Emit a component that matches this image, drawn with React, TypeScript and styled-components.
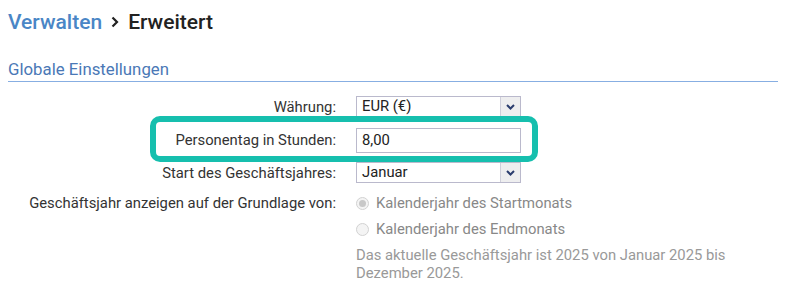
import React from 'react'
import styled, { createGlobalStyle } from 'styled-components'

const GlobalStyle = createGlobalStyle`
  body {
    margin: 0;
    background: #fff;
    font-family: Roboto, 'Liberation Sans', Arial, sans-serif;
  }
`

const Page = styled.div`
  padding: 8px 25px 0 8px;
`

const Title = styled.h1`
  margin: 0;
  font-size: 21px;
  font-weight: 500;
  line-height: 28px;
  color: #222;
  display: flex;
  align-items: center;
  gap: 9px;
`

const Crumb = styled.span`
  color: #4a86c6;
`

const Section = styled.h2`
  margin: 22px 0 0;
  font-size: 16.8px;
  font-weight: 400;
  line-height: 22px;
  color: #4a78b6;
  padding-bottom: 1px;
  border-bottom: 1px solid #87aee2;
`

const Form = styled.div`
  margin-top: 11px;
`

const Row = styled.div<{ $height?: number; $top?: boolean }>`
  position: relative;
  display: grid;
  grid-template-columns: 328px 165px;
  column-gap: 20px;
  align-items: ${p => (p.$top ? 'start' : 'center')};
  height: ${p => (p.$height ? `${p.$height}px` : 'auto')};
`

const Label = styled.label<{ $lh?: number }>`
  text-align: right;
  font-size: 14.8px;
  color: #333;
  line-height: ${p => p.$lh || 20}px;
  white-space: nowrap;
`

const SelectBox = styled.div`
  display: flex;
  height: 21px;
  border: 1px solid #bab9cc;
  box-sizing: border-box;
  font-size: 14.8px;
  color: #222;
  background: #fff;
`

const SelectValue = styled.div`
  flex: 1;
  padding-left: 5px;
  line-height: 19px;
`

const Arrow = styled.div`
  width: 19px;
  background: #eeeeef;
  border-left: 1px solid #cfcfda;
  display: flex;
  align-items: center;
  justify-content: center;
`

const TextInput = styled.div`
  height: 25px;
  box-sizing: border-box;
  border: 1px solid #bab9cc;
  padding-left: 5px;
  font-size: 14.8px;
  line-height: 23px;
  color: #222;
`

const Highlight = styled.div`
  position: absolute;
  left: 142px;
  top: -4px;
  width: 388px;
  height: 46px;
  box-sizing: border-box;
  border: 6px solid #16bfae;
  border-radius: 10px;
  pointer-events: none;
`

const Options = styled.div`
  grid-column: 2;
  width: 425px;
`

const Option = styled.div`
  display: flex;
  align-items: center;
  gap: 7px;
  height: 26px;
  font-size: 14.8px;
  color: #888;
`

const Radio = styled.span<{ $checked?: boolean }>`
  width: 13px;
  height: 13px;
  box-sizing: border-box;
  border-radius: 50%;
  border: 1px solid #d2d2d2;
  background: #f4f4f4;
  display: flex;
  align-items: center;
  justify-content: center;
  &::after {
    content: '';
    width: 7px;
    height: 7px;
    border-radius: 50%;
    background: ${p => (p.$checked ? '#c8c8c8' : 'transparent')};
  }
`

const Note = styled.p`
  margin: 4px 0 0;
  font-size: 14.8px;
  line-height: 18px;
  color: #999;
`

const Chevron = () => (
  <svg width='9' height='6' viewBox='0 0 9 6'>
    <path d='M1 1l3.5 3.5L8 1' fill='none' stroke='#2b3d6e' strokeWidth='2' />
  </svg>
)

const CrumbArrow = () => (
  <svg width='8' height='12' viewBox='0 0 8 12'>
    <path d='M1.5 1.5L6 6l-4.5 4.5' fill='none' stroke='#222' strokeWidth='2.2' />
  </svg>
)

const Select = ({ value }: { value: string }) => (
  <SelectBox>
    <SelectValue>{value}</SelectValue>
    <Arrow>
      <Chevron />
    </Arrow>
  </SelectBox>
)

const App = () => (
  <Page>
    <GlobalStyle />
    <Title>
      <Crumb>Verwalten</Crumb>
      <CrumbArrow />
      <span>Erweitert</span>
    </Title>
    <Section>Globale Einstellungen</Section>
    <Form>
      <Row $height={27}>
        <Label>Währung:</Label>
        <Select value='EUR (€)' />
      </Row>
      <Row $height={40}>
        <Label>Personentag in Stunden:</Label>
        <TextInput>8,00</TextInput>
        <Highlight />
      </Row>
      <Row $height={25}>
        <Label>Start des Geschäftsjahres:</Label>
        <Select value='Januar' />
      </Row>
      <Row $top style={{ marginTop: 5 }}>
        <Label $lh={26}>Geschäftsjahr anzeigen auf der Grundlage von:</Label>
        <Options>
          <Option>
            <Radio $checked />
            Kalenderjahr des Startmonats
          </Option>
          <Option>
            <Radio />
            Kalenderjahr des Endmonats
          </Option>
          <Note>
            Das aktuelle Geschäftsjahr ist 2025 von Januar 2025 bis Dezember 2025.
          </Note>
        </Options>
      </Row>
    </Form>
  </Page>
)

export default App
